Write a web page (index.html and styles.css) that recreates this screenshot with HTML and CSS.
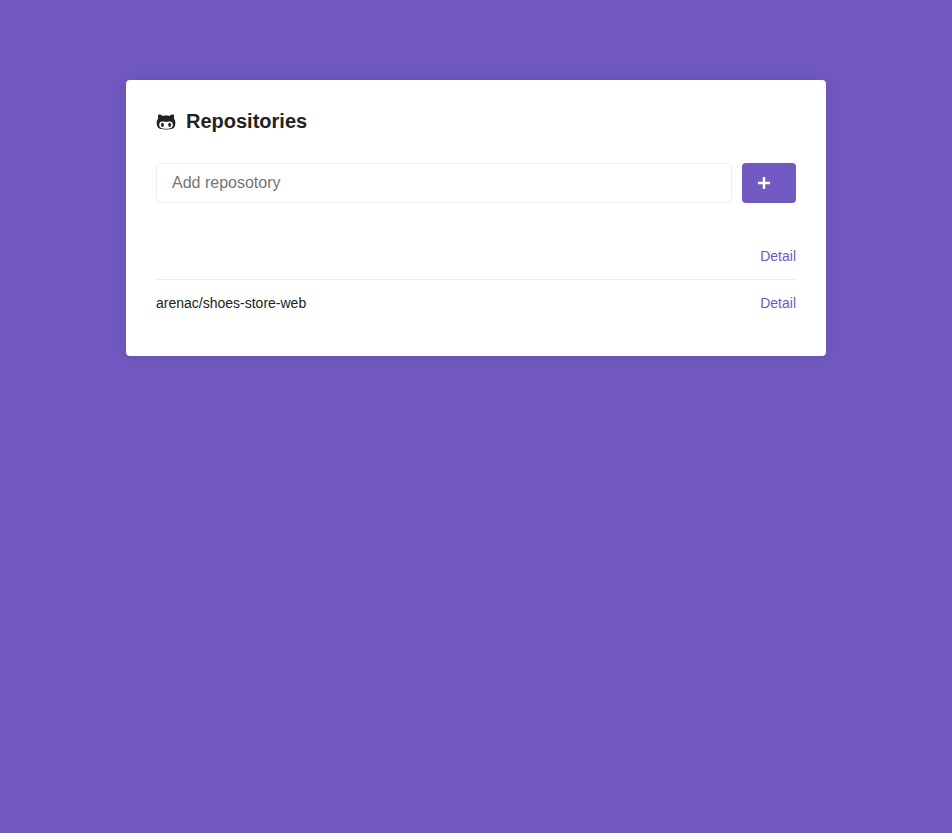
FILE: index.html
```
<!DOCTYPE html>
<html lang="en">
<head>
<meta charset="utf-8">
<title>Repositories</title>
<link rel="stylesheet" href="styles.css">
</head>
<body>
<main class="container">
  <h1 class="title">
    <svg class="title-icon" viewBox="0 0 480 512" fill="currentColor" aria-hidden="true"><path d="M186.100 328.700c0 20.900-10.900 55.100-36.700 55.100s-36.700-34.200-36.700-55.100 10.900-55.100 36.700-55.100 36.700 34.200 36.700 55.100zM480 278.200c0 31.900-3.200 65.700-17.500 95-37.900 76.600-142.100 74.800-216.700 74.800-75.800 0-186.200 2.700-225.600-74.800-14.600-29-20.200-63.100-20.200-95 0-41.900 13.900-81.500 41.500-113.600-5.200-15.800-7.700-32.400-7.700-48.800 0-21.500 4.900-32.300 14.600-51.800 45.300 0 74.300 9 108.800 36 29-6.900 58.800-10 88.700-10 27 0 54.200 2.900 80.400 9.200 34-26.700 63-35.200 107.800-35.200 9.800 19.500 14.600 30.300 14.600 51.800 0 16.400-2.600 32.700-7.700 48.200 27.500 32.400 39 72.300 39 114.200zm-64.300 50.500c0-43.900-26.700-82.600-73.500-82.600-18.900 0-37 3.400-56 6-14.900 2.300-29.800 3.200-45.100 3.200-15.200 0-30.100-.9-45.100-3.200-18.700-2.600-37-6-56-6-46.800 0-73.500 38.700-73.500 82.600 0 87.800 80.400 101.300 150.400 101.300h48.200c70.300 0 150.600-13.400 150.600-101.300zm-82.600-55.100c-25.800 0-36.700 34.200-36.700 55.100s10.900 55.100 36.700 55.100 36.700-34.200 36.700-55.100-10.900-55.100-36.700-55.100z"/></svg>
    Repositories
  </h1>
  <form class="form">
    <input class="field" type="text" placeholder="Add reposotory">
    <button class="submit" type="button" aria-label="Add"><svg class="plus" viewBox="0 0 14 14" fill="none" stroke="currentColor" stroke-width="2.5"><path d="M7 .9v12.200M.9 7h12.200"/></svg></button>
  </form>
  <ul class="list">
    <li class="row"><span></span><a class="link">Detail</a></li>
    <li class="row"><span>arenac/shoes-store-web</span><a class="link">Detail</a></li>
  </ul>
</main>
</body>
</html>
```
FILE: styles.css
```
* { margin: 0; padding: 0; box-sizing: border-box; }
body {
  display: flow-root;
  min-height: 100vh;
  background: #7159c1;
  color: #222;
  font: 14px "Liberation Sans", Arial, sans-serif;
}
.container {
  max-width: 700px;
  margin: 80px auto;
  padding: 30px;
  background: #fff;
  border-radius: 4px;
  box-shadow: 0 0 20px rgba(0, 0, 0, 0.1);
}
.title { display: flex; align-items: center; font-size: 20px; line-height: 23px; }
.title-icon { width: 20px; height: 20px; margin-right: 10px; }
.form { display: flex; margin-top: 30px; }
.field {
  flex: 1;
  height: 40px;
  padding: 10px 15px;
  border: 1px solid #eee;
  border-radius: 4px;
  font: 16px "Liberation Sans", Arial, sans-serif;
}
.field::placeholder { color: #757575; }
.submit {
  display: flex;
  align-items: center;
  width: 54px;
  height: 40px;
  margin-left: 10px;
  padding: 0 15px;
  border: 0;
  border-radius: 4px;
  background: #7159c1;
  color: #fff;
}
.plus { width: 14px; height: 14px; }
.list { margin-top: 30px; list-style: none; }
.row { display: flex; justify-content: space-between; padding: 15px 0; line-height: 16px; }
.row + .row { border-top: 1px solid #eee; }
.link { color: #7159c1; }
```
